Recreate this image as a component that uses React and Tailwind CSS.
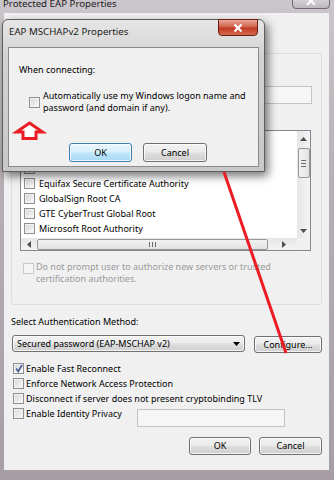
import React from "react";

const Check = ({ checked = false, disabled = false }) => (
  <span
    className={
      disabled
        ? "relative block h-[11px] w-[11px] shrink-0 border border-[#c9c9c9] bg-[#f5f5f5]"
        : "relative block h-[11px] w-[11px] shrink-0 border border-[#8f8f8f] bg-gradient-to-br from-[#d4d4d4] to-[#fbfbfb] shadow-[inset_0_0_0_1px_#f3f3f3]"
    }
  >
    {checked && (
      <svg className="absolute left-[1px] top-[0px]" width="8" height="9" viewBox="0 0 8 9">
        <path d="M1.2 4.6 L3.2 7.4 L7 1" fill="none" stroke="#4a5e96" strokeWidth="1.7" />
      </svg>
    )}
  </span>
);

const Btn = ({ children, focus = false, className = "" }) => (
  <div
    className={`${className} flex items-center justify-center rounded-[3px] border shadow-[inset_0_0_0_1px_rgba(255,255,255,0.75)] ${
      focus
        ? "border-[#3c7fb1] bg-[linear-gradient(#eaf6fd,#d9f0fc_45%,#bee6fd_55%,#a7d9f5)]"
        : "border-[#707070] bg-[linear-gradient(#f2f2f2,#ebebeb_45%,#dddddd_55%,#cfcfcf)]"
    }`}
  >
    {children}
  </div>
);

const Tri = ({ dir }) => {
  const pts = {
    up: "0,4 3.5,0 7,4",
    down: "0,0 7,0 3.5,4",
    left: "4,0 4,7 0,3.5",
    right: "0,0 4,3.5 0,7",
  }[dir];
  const vertical = dir === "up" || dir === "down";
  return (
    <svg width={vertical ? 7 : 4} height={vertical ? 4 : 7} viewBox={vertical ? "0 0 7 4" : "0 0 4 7"}>
      <polygon points={pts} fill="#4d4d4d" />
    </svg>
  );
};

// the first rows sit under the small dialog, only their boxes peek out
const certs = [
  "",
  "",
  "",
  "Equifax Secure Certificate Authority",
  "GlobalSign Root CA",
  "GTE CyberTrust Global Root",
  "Microsoft Root Authority",
];

export default function App() {
  return (
    <div className="relative h-[480px] w-[334px] overflow-hidden bg-[linear-gradient(#cbc6cb,#b5aeb4_40%,#a69ea4)] font-['Noto_Sans',sans-serif] text-[9px] text-black">
      {/* outer window title bar */}
      <div className="flex h-[13px] items-start justify-between">
        <div className="-mt-[3px] pl-[3px] text-[9.7px] leading-[14px] text-[#1c1c1c]">Protected EAP Properties</div>
        <div className="mr-[4px] -mt-[4px] flex h-[13px] w-[38px] items-start justify-center rounded-b-[4px] border border-[#6f6870] bg-[linear-gradient(#ddd9dd,#bdb7bd)]">
          <svg width="10" height="8" viewBox="0 0 10 8">
            <path d="M1 0 L9 8 M9 0 L1 8" stroke="#ffffff" strokeWidth="2" />
          </svg>
        </div>
      </div>

      {/* outer window client area */}
      <div className="ml-[4px] h-[457px] w-[325px] bg-[#f0f0f0] px-[7px] pt-[40px]">
        <div className="h-[252px] rounded-[3px] border border-[#d5dfe5]">
          <div className="ml-[25px] mr-[9px] mt-[32px] h-[18px] border border-[#c3c3c3] bg-[#f6f6f6]" />

          {/* certificate list */}
          <div className="ml-[8px] mr-[10px] mt-[26px] grid h-[121px] grid-cols-[1fr_13px] grid-rows-[1fr_12px] border border-[#828790] bg-white">
            <div className="overflow-hidden">
              {certs.map((c, i) => (
                <div key={i} className="flex h-[15px] items-center gap-[4px] whitespace-nowrap pl-[3px]">
                  <Check />
                  {c && <span>{c}</span>}
                </div>
              ))}
            </div>
            <div className="flex flex-col items-center bg-[linear-gradient(90deg,#e6e6e6,#f4f4f4)]">
              <div className="flex h-[15px] items-center">
                <Tri dir="up" />
              </div>
              <div className="mt-[2px] flex h-[30px] w-[12px] flex-col items-center justify-center gap-[2px] rounded-[2px] border border-[#979797] bg-[linear-gradient(90deg,#f2f2f2,#e3e3e3)]">
                <span className="block h-px w-[5px] bg-[#6d6d6d]" />
                <span className="block h-px w-[5px] bg-[#6d6d6d]" />
                <span className="block h-px w-[5px] bg-[#6d6d6d]" />
              </div>
              <div className="mt-auto flex h-[15px] items-center">
                <Tri dir="down" />
              </div>
            </div>
            <div className="flex items-center bg-[linear-gradient(#e6e6e6,#f4f4f4)]">
              <div className="flex w-[15px] justify-center">
                <Tri dir="left" />
              </div>
              <div className="ml-[1px] flex h-[11px] w-[231px] items-center justify-center gap-[2px] rounded-[2px] border border-[#979797] bg-[linear-gradient(#f2f2f2,#e3e3e3)]">
                <span className="block h-[5px] w-px bg-[#6d6d6d]" />
                <span className="block h-[5px] w-px bg-[#6d6d6d]" />
                <span className="block h-[5px] w-px bg-[#6d6d6d]" />
              </div>
              <div className="ml-auto flex w-[15px] justify-start">
                <Tri dir="right" />
              </div>
            </div>
            <div className="bg-[#f0f0f0]" />
          </div>

          <div className="ml-[11px] mt-[10px] flex items-start gap-[2px] text-[#9a9a9a]">
            <div className="mt-[2px]">
              <Check disabled />
            </div>
            <div className="leading-[12px]">
              Do not prompt user to authorize new servers or trusted
              <br />
              certification authorities.
            </div>
          </div>
        </div>

        <div className="mt-[10px] h-[14px] leading-[14px]">Select Authentication Method:</div>

        <div className="mt-[6px] flex items-start">
          <Btn className="ml-[1px] h-[17px] w-[233px] !justify-between pl-[4px] pr-[4px]">
            <span>Secured password (EAP-MSCHAP v2)</span>
            <svg width="7" height="4" viewBox="0 0 7 4">
              <polygon points="0,0 7,0 3.5,4" fill="#000" />
            </svg>
          </Btn>
          <Btn className="ml-[9px] mt-[1px] h-[17px] w-[68px]">Configure...</Btn>
        </div>

        <div className="mt-[8px] flex h-[15px] items-center gap-[2px] pl-[2px]">
          <Check checked />
          <span>Enable Fast Reconnect</span>
        </div>
        <div className="flex h-[15px] items-center gap-[2px] pl-[2px]">
          <Check />
          <span>Enforce Network Access Protection</span>
        </div>
        <div className="flex h-[15px] items-center gap-[2px] pl-[2px]">
          <Check />
          <span>Disconnect if server does not present cryptobinding TLV</span>
        </div>
        <div className="flex items-start">
          <div className="flex h-[15px] w-[126px] items-center gap-[2px] pl-[2px]">
            <Check />
            <span>Enable Identity Privacy</span>
          </div>
          <div className="mt-[3px] h-[18px] w-[148px] border border-[#c3c3c3] bg-[#f6f6f6]" />
        </div>

        <div className="mt-[10px] flex justify-end gap-[8px]">
          <Btn className="h-[18px] w-[62px]">OK</Btn>
          <Btn className="h-[18px] w-[63px]">Cancel</Btn>
        </div>
      </div>

      {/* EAP MSCHAPv2 Properties dialog on top */}
      <div className="absolute left-[2px] top-[19px] h-[153px] w-[263px] rounded-t-[6px] border border-[#5e5e5e] bg-[linear-gradient(#e6e6e6,#d2d2d2_25%,#c8c8c8)] px-[5px] shadow-[3px_4px_10px_rgba(0,0,0,0.55)]">
        <div className="flex h-[27px] items-start justify-between">
          <div className="pl-[1px] pt-[5px] text-[9.7px] leading-[14px] text-[#1a1a1a]">EAP MSCHAPv2 Properties</div>
          <div className="-mt-[1px] mr-[1px] flex h-[17px] w-[40px] items-center justify-center rounded-b-[4px] border border-[#6b1d14] bg-[linear-gradient(#e9a899,#d0614c_45%,#c23a23_55%,#d46a4f)]">
            <svg width="10" height="8" viewBox="0 0 10 8">
              <path d="M1.5 0.5 L8.5 7.5 M8.5 0.5 L1.5 7.5" stroke="#ffffff" strokeWidth="2.2" />
            </svg>
          </div>
        </div>
        <div className="h-[120px] border border-[#8a8a8a] bg-[#f0f0f0]">
          <div className="ml-[10px] mt-[15px] h-[14px] leading-[14px]">When connecting:</div>
          <div className="ml-[20px] mt-[13px] flex items-center gap-[3px]">
            <Check />
            <div className="leading-[12px]">
              Automatically use my Windows logon name and
              <br />
              password (and domain if any).
            </div>
          </div>
          <div className="ml-[60px] mt-[29px] flex gap-[11px]">
            <Btn focus className="h-[19px] w-[63px]">OK</Btn>
            <Btn className="h-[19px] w-[64px]">Cancel</Btn>
          </div>
        </div>
      </div>

      {/* red annotations */}
      <svg className="pointer-events-none absolute left-0 top-0" width="334" height="480" viewBox="0 0 334 480">
        <polygon
          points="29.5,123 42.5,132 36,132 36,138.5 23,138.5 23,132 16.5,132"
          fill="#ffffff"
          stroke="#ec1c24"
          strokeWidth="3"
          strokeLinejoin="miter"
        />
        <line x1="224" y1="172" x2="286" y2="353" stroke="#ec1c24" strokeWidth="3" />
      </svg>
    </div>
  );
}
